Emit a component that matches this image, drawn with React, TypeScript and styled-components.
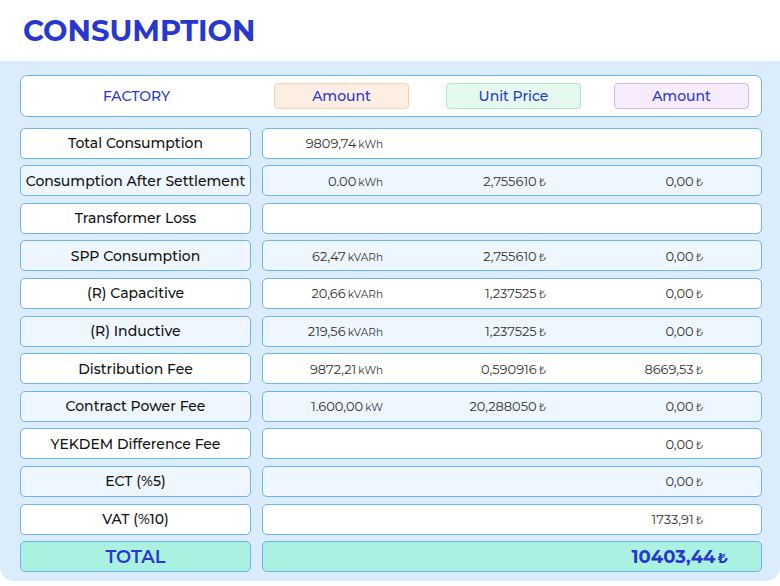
import React from "react";
import styled, { createGlobalStyle } from "styled-components";

const Global = createGlobalStyle`
  body { margin: 0; background: #fff; font-family: "Montserrat", "Open Sans", "Noto Sans", sans-serif; }
`;

const Page = styled.div`
  width: 780px;
  height: 586px;
  background: #fff;
`;

const Title = styled.h1`
  margin: 0;
  height: 61px;
  padding-left: 23px;
  display: flex;
  align-items: center;
  font-size: 29px;
  font-weight: 700;
  color: #2838cf;
`;

const Panel = styled.div`
  background: #dbecfd;
  height: 520px;
  border-radius: 0 0 14px 14px;
  padding: 14px 18px 0 20px;
  box-sizing: border-box;
  display: flex;
  flex-direction: column;
  gap: 6.6px;
`;

const HeaderCard = styled.div`
  height: 42px;
  box-sizing: border-box;
  background: #fff;
  border: 1px solid #6bb4f5;
  border-radius: 7px;
  display: flex;
  align-items: center;
  margin-bottom: 4px;
`;

const Factory = styled.div`
  width: 231px;
  text-align: center;
  color: #2838cf;
  font-size: 14px;
  font-weight: 500;
`;

const Pill = styled.div<{ bg: string; bd: string; ml: number }>`
  width: 135px;
  height: 26px;
  box-sizing: border-box;
  margin-left: ${(p) => p.ml}px;
  background: ${(p) => p.bg};
  border: 1px solid ${(p) => p.bd};
  border-radius: 4px;
  display: flex;
  align-items: center;
  justify-content: center;
  color: #2838cf;
  font-size: 14px;
  font-weight: 500;
`;

const Row = styled.div`
  display: flex;
  gap: 11px;
  height: 31px;
`;

const Cell = styled.div<{ tone: "white" | "blue" | "total" }>`
  height: 31px;
  box-sizing: border-box;
  border: 1px solid #6bb4f5;
  border-radius: 5px;
  background: ${(p) => (p.tone === "white" ? "#fff" : p.tone === "blue" ? "#eef6ff" : "#abf1e1")};
`;

const Label = styled(Cell)<{ big?: boolean }>`
  width: 231px;
  display: flex;
  align-items: center;
  justify-content: center;
  font-size: ${(p) => (p.big ? "18px" : "14px")};
  font-weight: ${(p) => (p.big ? 600 : 500)};
  color: ${(p) => (p.big ? "#2838cf" : "#111")};
  white-space: nowrap;
`;

const Values = styled(Cell)`
  width: 500px;
  display: grid;
  grid-template-columns: 120px 163px 157px;
  align-items: center;
`;

const Val = styled.div<{ big?: boolean }>`
  text-align: right;
  font-size: ${(p) => (p.big ? "18px" : "13px")};
  font-weight: ${(p) => (p.big ? 700 : 400)};
  color: ${(p) => (p.big ? "#2838cf" : "#333")};
  white-space: nowrap;
  margin-right: ${(p) => (p.big ? "-25px" : "0")};
`;

const Unit = styled.span<{ big?: boolean }>`
  font-size: ${(p) => (p.big ? "14px" : "10.5px")};
  margin-left: 2px;
`;

type R = { label: string; a?: [string, string]; u?: string; t?: string };

const rows: R[] = [
  { label: "Total Consumption", a: ["9809,74", "kWh"] },
  { label: "Consumption After Settlement", a: ["0.00", "kWh"], u: "2,755610", t: "0,00" },
  { label: "Transformer Loss" },
  { label: "SPP Consumption", a: ["62,47", "kVARh"], u: "2,755610", t: "0,00" },
  { label: "(R) Capacitive", a: ["20,66", "kVARh"], u: "1,237525", t: "0,00" },
  { label: "(R) Inductive", a: ["219,56", "kVARh"], u: "1,237525", t: "0,00" },
  { label: "Distribution Fee", a: ["9872,21", "kWh"], u: "0,590916", t: "8669,53" },
  { label: "Contract Power Fee", a: ["1.600,00", "kW"], u: "20,288050", t: "0,00" },
  { label: "YEKDEM Difference Fee", t: "0,00" },
  { label: "ECT (%5)", t: "0,00" },
  { label: "VAT (%10)", t: "1733,91" },
];

const Amount = ({ v, u }: { v: string; u: string }) => (
  <Val>
    {v}
    <Unit>{u}</Unit>
  </Val>
);

export default function App() {
  return (
    <Page>
      <Global />
      <Title>CONSUMPTION</Title>
      <Panel>
        <HeaderCard>
          <Factory>FACTORY</Factory>
          <Pill ml={22} bg="#fdeee4" bd="#f7cdb4">Amount</Pill>
          <Pill ml={37} bg="#e6f9ef" bd="#a6ebc8">Unit Price</Pill>
          <Pill ml={33} bg="#f7ebfe" bd="#d6b5f7">Amount</Pill>
        </HeaderCard>
        {rows.map((r, i) => {
          const tone = i % 2 === 0 ? "white" : "blue";
          return (
            <Row key={r.label}>
              <Label tone={tone}>{r.label}</Label>
              <Values tone={tone}>
                {r.a ? <Amount v={r.a[0]} u={r.a[1]} /> : <div />}
                {r.u ? <Amount v={r.u} u="₺" /> : <div />}
                {r.t ? <Amount v={r.t} u="₺" /> : <div />}
              </Values>
            </Row>
          );
        })}
        <Row>
          <Label tone="total" big>TOTAL</Label>
          <Values tone="total">
            <div />
            <div />
            <Val big>
              10403,44<Unit big>₺</Unit>
            </Val>
          </Values>
        </Row>
      </Panel>
    </Page>
  );
}
